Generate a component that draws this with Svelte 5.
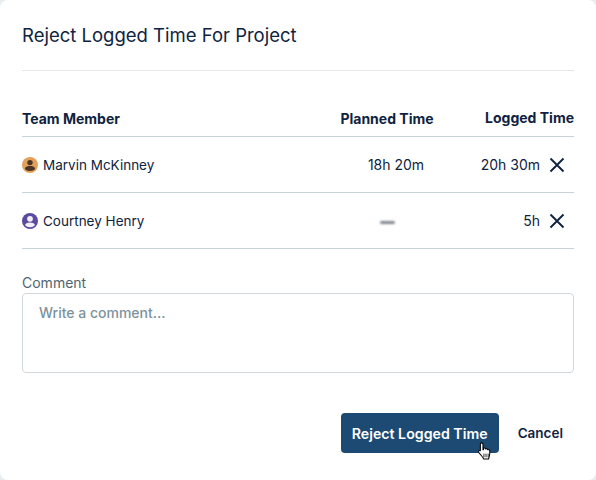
<script>
  const rows = [
    { name: 'Marvin McKinney', planned: '18h 20m', logged: '20h 30m', tone: 'orange' },
    { name: 'Courtney Henry', planned: '—', logged: '5h', tone: 'purple' }
  ];
</script>

<div class="modal">
  <h1>Reject Logged Time For Project</h1>
  <div class="rule"></div>

  <div class="table">
    <div class="row head">
      <div>Team Member</div>
      <div class="planned">Planned Time</div>
      <div class="logged">Logged Time</div>
    </div>
    {#each rows as r}
      <div class="row body">
        <div class="member">
          <svg class="avatar" viewBox="0 0 16 16" width="16" height="16">
            {#if r.tone === 'orange'}
              <circle cx="8" cy="8" r="8" fill="#e3a05a" />
              <circle cx="8" cy="5.6" r="2.7" fill="#4a3526" />
              <path d="M2.9 11.2C3.6 9.4 5.6 8.9 8 8.9s4.4.5 5.1 2.3C13.1 12.6 11 14 8 14s-5.1-1.4-5.1-2.8z" fill="#4a3526" />
            {:else}
              <circle cx="8" cy="8" r="8" fill="#5b4a9e" />
              <circle cx="8" cy="5.8" r="2.9" fill="#f1eef8" />
              <path d="M3 12c.7-1.9 2.7-2.6 5-2.6s4.3.7 5 2.6c-1.2 1.3-3 2.3-5 2.3S4.2 13.3 3 12z" fill="#f1eef8" />
            {/if}
          </svg>
          <span>{r.name}</span>
        </div>
        <div class="planned">
          {#if r.planned === '—'}<span class="dash"></span>{:else}<span class="time">{r.planned}</span>{/if}
        </div>
        <div class="logged">
          <span>{r.logged}</span>
          <svg class="x" viewBox="0 0 16 16" width="16" height="16">
            <path d="M1.5 1.5l13 13M14.5 1.5l-13 13" stroke="#0f2340" stroke-width="1.9" fill="none" />
          </svg>
        </div>
      </div>
    {/each}
  </div>

  <label class="comment">
    <span class="label">Comment</span>
    <textarea placeholder="Write a comment..."></textarea>
  </label>

  <div class="actions">
    <div class="primary-wrap">
      <button class="primary">Reject Logged Time</button>
      <svg class="cursor" viewBox="0 0 16 20" width="17" height="21">
        <path d="M4.3 1.8c.8 0 1.300.6 1.300 1.400v5.200l.5-.1V7c.9-.6 1.800-.2 2 .6.800-.5 1.800-.2 2 .7.800-.4 1.900 0 2 1 .1 2.500 0 4.300-.6 5.800-.3.800-.5 1.300-.5 2H6.200c-.2-1-.8-1.700-1.600-2.600L1.700 11c-.6-.8-.3-1.700.4-2 .6-.3 1.200 0 1 .2V3.200c0-.8.400-1.400 1.200-1.400z" fill="#fff" stroke="#000" stroke-width="1" stroke-linejoin="round" />
        <path d="M6.500 12v3.500M8.500 12v3.500M10.500 12v3.500" stroke="#000" stroke-width=".8" />
      </svg>
    </div>
    <button class="cancel">Cancel</button>
  </div>
</div>

<style>
  :global(body) {
    margin: 0;
    background: #e8edf0;
  }
  .modal {
    box-sizing: border-box;
    width: 596px;
    height: 480px;
    background: #fff;
    border-radius: 8px;
    padding: 23px 22px 22px;
    font-family: Inter, "Liberation Sans", sans-serif;
    color: #0f2340;
    font-size: 14px;
  }
  h1 {
    margin: 0;
    font-size: 18.5px;
    font-weight: 400;
    line-height: 24px;
  }
  .rule {
    height: 1px;
    background: #e3e7ea;
    margin-top: 23px;
  }
  .table {
    margin-top: 29px;
  }
  .row {
    display: grid;
    grid-template-columns: 1fr 94px 140px;
    align-items: center;
    border-bottom: 1px solid #c6d4da;
  }
  .head {
    height: 37px;
    font-weight: 700;
    font-size: 14px;
    box-sizing: border-box;
  }
  .head .logged {
    padding-bottom: 2px;
  }
  .body {
    height: 56px;
    box-sizing: border-box;
  }
  .member {
    display: flex;
    align-items: center;
    gap: 5px;
    font-size: 13.5px;
  }
  .planned {
    text-align: center;
  }
  .time {
    padding-left: 18px;
  }
  .logged {
    display: flex;
    justify-content: flex-end;
    align-items: center;
    gap: 9px;
  }
  .body .logged {
    padding-right: 9px;
  }
  .dash {
    display: inline-block;
    width: 15px;
    height: 3px;
    border-radius: 2px;
    background: #7f868f;
    filter: blur(1px);
    vertical-align: middle;
  }
  .comment {
    display: block;
    margin-top: 25px;
  }
  .label {
    display: block;
    color: #4f6670;
    line-height: 17px;
  }
  textarea {
    display: block;
    box-sizing: border-box;
    width: 100%;
    height: 80px;
    margin-top: 2px;
    padding: 9px 16px;
    border: 1px solid #d3d8dc;
    border-radius: 4px;
    font: inherit;
    font-weight: 500;
    line-height: 20px;
    resize: none;
    outline: none;
  }
  textarea::placeholder {
    color: #7d939c;
    opacity: 1;
  }
  .actions {
    display: flex;
    justify-content: flex-end;
    align-items: center;
    gap: 19px;
    margin-top: 40px;
    padding-right: 11px;
  }
  .primary-wrap {
    position: relative;
  }
  button {
    font: inherit;
    font-weight: 600;
    font-size: 13.5px;
    border: none;
    background: none;
    padding: 0;
  }
  .primary {
    display: block;
    width: 158px;
    height: 40px;
    background: #1c4a73;
    color: #fff;
    border-radius: 4px;
    font-size: 14.2px;
  }
  .cancel {
    color: #0f2340;
  }
  .cursor {
    position: absolute;
    left: 136px;
    top: 28px;
  }
</style>
